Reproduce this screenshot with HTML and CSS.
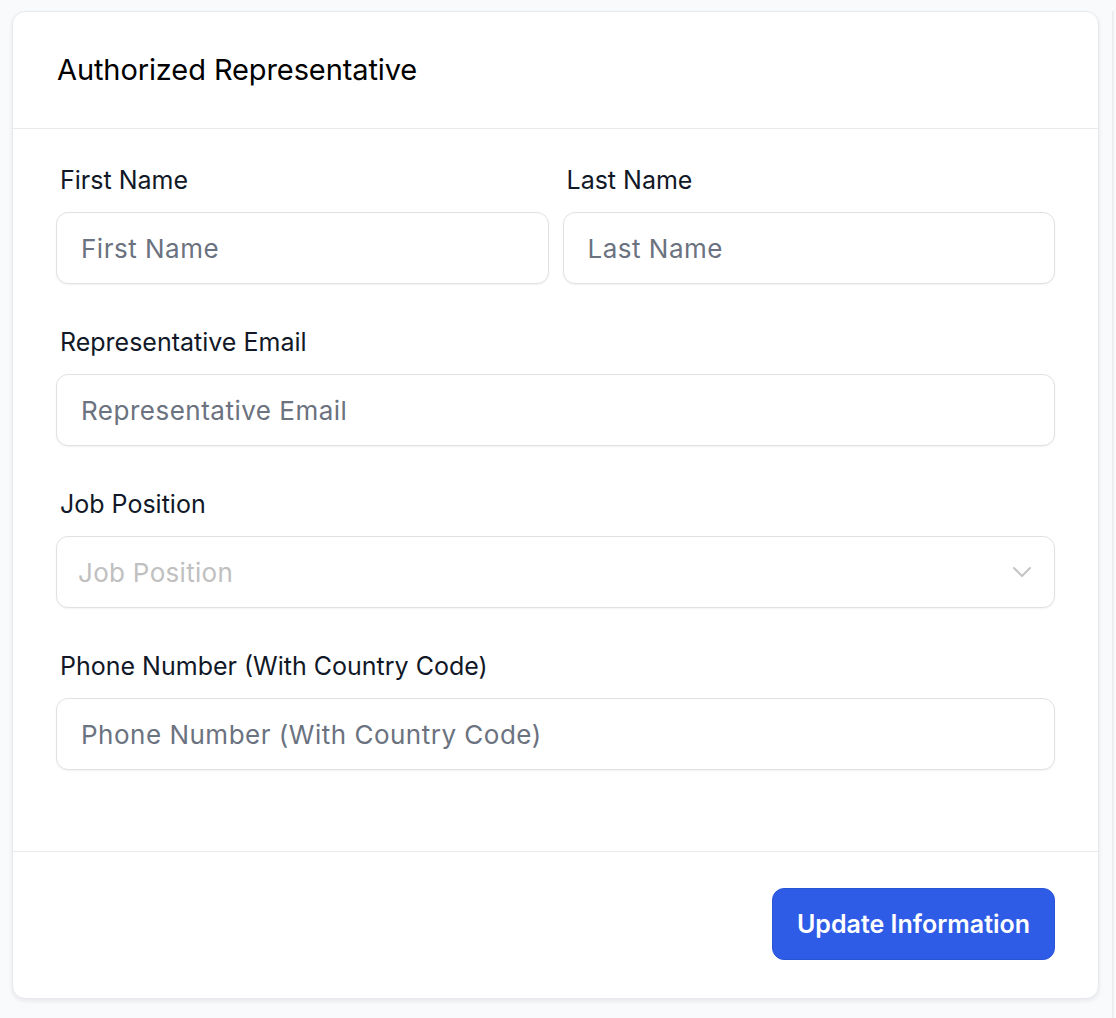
FILE: index.html
```html
<!DOCTYPE html>
<html>
<head>
<meta charset="utf-8">
<link rel="stylesheet" href="styles.css">
</head>
<body>
<div class="page">
  <div class="card">
    <div class="card-header">
      <h2 class="title">Authorized Representative</h2>
    </div>
    <div class="card-body">
      <div class="row two">
        <div class="field">
          <label class="label">First Name</label>
          <input class="input" placeholder="First Name">
        </div>
        <div class="field">
          <label class="label">Last Name</label>
          <input class="input" placeholder="Last Name">
        </div>
      </div>
      <div class="field">
        <label class="label">Representative Email</label>
        <input class="input" placeholder="Representative Email">
      </div>
      <div class="field">
        <label class="label">Job Position</label>
        <div class="select">
          <span class="select-placeholder">Job Position</span>
          <svg class="chevron" width="20" height="12" viewBox="0 0 20 12"><path d="M2 2 L10 10 L18 2" fill="none" stroke="#c4c4c4" stroke-width="2" stroke-linecap="round" stroke-linejoin="round"/></svg>
        </div>
      </div>
      <div class="field">
        <label class="label">Phone Number (With Country Code)</label>
        <input class="input" placeholder="Phone Number (With Country Code)">
      </div>
    </div>
    <div class="card-footer">
      <button class="btn">Update Information</button>
    </div>
  </div>
  <div class="side"></div>
</div>
</body>
</html>
```
FILE: styles.css
```css
* { box-sizing: border-box; }
html, body { margin: 0; padding: 0; }
body {
  background: #f9fafb;
  font-family: Inter, "Noto Sans", sans-serif;
  color: #111827;
}
.page {
  display: flex;
  padding: 11px 0 0 12px;
  height: 1018px;
  overflow: hidden;
}
.card {
  width: 1087px;
  height: 988px;
  background: #fff;
  border: 1px solid #e8e9ee;
  border-radius: 13px;
  box-shadow: 0 2px 4px rgba(17, 24, 39, 0.08);
  display: flex;
  flex-direction: column;
}
.side {
  margin-left: 13px;
  width: 4px;
  border-left: 2px solid #eceef1;
  background: #f9fafb;
}
.card-header {
  height: 117px;
  padding: 0 44px;
  display: flex;
  align-items: center;
  border-bottom: 1px solid #e9eaee;
}
.title {
  margin: 0 0 2px 0;
  font-size: 29px;
  font-weight: 400;
  color: #000;
  letter-spacing: -0.1px;
}
.card-body {
  padding: 35px 43px 0 43px;
  flex: 1;
  display: flex;
  flex-direction: column;
  gap: 42px;
}
.row.two {
  display: grid;
  grid-template-columns: 1fr 1fr;
  gap: 14px;
}
.field {
  display: flex;
  flex-direction: column;
}
.label {
  font-size: 25px;
  line-height: 32px;
  padding-left: 4px;
  margin-bottom: 16px;
  color: #111827;
}
.input, .select {
  height: 72px;
  width: 100%;
  border: 1px solid #dfe1e5;
  border-radius: 12px;
  background: #fff;
  box-shadow: 0 1px 2px rgba(16, 24, 40, 0.05);
  font-family: Inter, "Noto Sans", sans-serif;
  font-size: 26px;
  letter-spacing: 0.5px;
  padding: 0 24px;
  color: #111827;
  outline: none;
}
.input::placeholder { color: #6b7280; }
.select {
  display: flex;
  align-items: center;
  justify-content: space-between;
  padding: 0 22px 0 21px;
  letter-spacing: 0.3px;
}
.select-placeholder { color: #c0c0c0; }
.chevron { display: block; }
.card-footer {
  height: 147px;
  border-top: 1px solid #e9eaee;
  display: flex;
  justify-content: flex-end;
  align-items: center;
  padding: 0 43px 2px 0;
}
.btn {
  height: 72px;
  width: 283px;
  background: #2f5ce6;
  border: 1px solid #2a55d9;
  border-radius: 12px;
  color: #fff;
  font-family: Inter, "Noto Sans", sans-serif;
  font-size: 25px;
  font-weight: 600;
  cursor: pointer;
}
```
